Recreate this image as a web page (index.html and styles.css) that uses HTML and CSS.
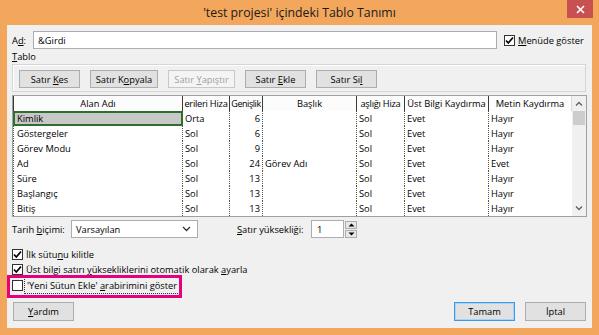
FILE: index.html
```html
<!DOCTYPE html>
<html lang="tr">
<head>
<meta charset="utf-8">
<title>Tablo Tanımı</title>
<link rel="stylesheet" href="styles.css">
</head>
<body>
<div class="window">
  <div class="titlebar">
    <span class="title">'test projesi' içindeki Tablo Tanımı</span>
    <div class="close"><svg width="9" height="9" viewBox="0 0 9 9"><path d="M1 1L8 8M8 1L1 8" stroke="#fff" stroke-width="1.6"/></svg></div>
  </div>
  <div class="client">
    <div class="row-name">
      <span class="lbl-ad">A<u>d</u>:</span>
      <div class="input name-input">&amp;Girdi</div>
      <label class="chk menu-chk"><span class="box"><svg width="11" height="11" viewBox="0 0 11 11"><path d="M2 5.5L4.3 8L9 2.5" fill="none" stroke="#000" stroke-width="1.7"/></svg></span><span><u>M</u>enüde göster</span></label>
    </div>
    <div class="lbl-tablo"><u>T</u>ablo</div>
    <div class="group">
      <button class="btn w61">Satır <u>K</u>es</button>
      <button class="btn w68">Satır K<u>o</u>pyala</button>
      <button class="btn w67 disabled">Satır <u>Y</u>apıştır</button>
      <button class="btn w61">Satır <u>E</u>kle</button>
      <button class="btn w61">Satır Si<u>l</u></button>
    </div>
    <div class="table">
      <div class="grid">
        <div class="hc c1"><span>Alan Adı</span></div>
        <div class="hc c2"><span class="tight">erileri Hiza</span></div>
        <div class="hc c3"><span class="tighter">Genişlik</span></div>
        <div class="hc c4"><span>Başlık</span></div>
        <div class="hc c5"><span class="tight">aşlığı Hiza</span></div>
        <div class="hc c6"><span>Üst Bilgi Kaydırma</span></div>
        <div class="hc c7"><span>Metin Kaydırma</span></div>

        <div class="bc c1 sel">Kimlik</div><div class="bc c2">Orta</div><div class="bc c3 num">6</div><div class="bc c4"></div><div class="bc c5">Sol</div><div class="bc c6">Evet</div><div class="bc c7">Hayır</div>
        <div class="bc c1">Göstergeler</div><div class="bc c2">Sol</div><div class="bc c3 num">6</div><div class="bc c4"></div><div class="bc c5">Sol</div><div class="bc c6">Evet</div><div class="bc c7">Hayır</div>
        <div class="bc c1">Görev Modu</div><div class="bc c2">Sol</div><div class="bc c3 num">9</div><div class="bc c4"></div><div class="bc c5">Sol</div><div class="bc c6">Evet</div><div class="bc c7">Hayır</div>
        <div class="bc c1">Ad</div><div class="bc c2">Sol</div><div class="bc c3 num">24</div><div class="bc c4">Görev Adı</div><div class="bc c5">Sol</div><div class="bc c6">Evet</div><div class="bc c7">Evet</div>
        <div class="bc c1">Süre</div><div class="bc c2">Sol</div><div class="bc c3 num">13</div><div class="bc c4"></div><div class="bc c5">Sol</div><div class="bc c6">Evet</div><div class="bc c7">Hayır</div>
        <div class="bc c1">Başlangıç</div><div class="bc c2">Sol</div><div class="bc c3 num">13</div><div class="bc c4"></div><div class="bc c5">Sol</div><div class="bc c6">Evet</div><div class="bc c7">Hayır</div>
        <div class="bc c1">Bitiş</div><div class="bc c2">Sol</div><div class="bc c3 num">13</div><div class="bc c4"></div><div class="bc c5">Sol</div><div class="bc c6">Evet</div><div class="bc c7">Hayır</div>
      </div>
      <div class="scrollbar">
        <div class="sb-arrow"><svg width="8" height="5" viewBox="0 0 8 5"><path d="M1 4.5L4 1.5L7 4.5" fill="none" stroke="#606060" stroke-width="1.3"/></svg></div>
        <div class="sb-thumb"></div>
        <div class="sb-track"></div>
        <div class="sb-arrow"><svg width="8" height="5" viewBox="0 0 8 5"><path d="M1 0.5L4 3.5L7 0.5" fill="none" stroke="#606060" stroke-width="1.3"/></svg></div>
      </div>
    </div>
    <div class="row-date">
      <span class="lbl-date">Tarih <u>b</u>içimi:</span>
      <div class="select"><span>Varsayılan</span><svg width="9" height="6" viewBox="0 0 9 6"><path d="M1 1L4.5 4.5L8 1" fill="none" stroke="#333" stroke-width="1.3"/></svg></div>
      <span class="lbl-height"><u>S</u>atır yüksekliği:</span>
      <div class="input spin-input">1</div>
      <div class="spin">
        <div class="spin-btn"><svg width="7" height="4" viewBox="0 0 7 4"><path d="M0.5 3.5L3.5 0.5L6.5 3.5Z" fill="#000"/></svg></div>
        <div class="spin-btn"><svg width="7" height="4" viewBox="0 0 7 4"><path d="M0.5 0.5L3.5 3.5L6.5 0.5Z" fill="#000"/></svg></div>
      </div>
    </div>
    <div class="checks">
      <label class="chk crow"><span class="box"><svg width="11" height="11" viewBox="0 0 11 11"><path d="M2 5.5L4.3 8L9 2.5" fill="none" stroke="#000" stroke-width="1.7"/></svg></span><span>İlk sütu<u>n</u>u kilitle</span></label>
      <label class="chk crow"><span class="box"><svg width="11" height="11" viewBox="0 0 11 11"><path d="M2 5.5L4.3 8L9 2.5" fill="none" stroke="#000" stroke-width="1.7"/></svg></span><span>Üst bilgi satırı <u>y</u>üksekliklerini otomatik olarak <u>a</u>yarla</span></label>
      <label class="chk crow hl-row"><span class="box"></span><span class="focus">'Yeni Sütun Ekle' <u>a</u>rabirimini göster</span><span class="highlight"></span></label>
    </div>
    <div class="row-bottom">
      <button class="btn2 yardim"><u>Y</u>ardım</button>
      <div class="spacer"></div>
      <button class="btn2 default">Tamam</button>
      <button class="btn2 iptal">İptal</button>
    </div>
  </div>
</div>
</body>
</html>
```
FILE: styles.css
```css
* { box-sizing: border-box; }
body {
  margin: 0;
  font-family: "Open Sans", "Noto Sans", sans-serif;
  font-size: 9.3px;
  color: #000;
}
u { text-decoration: underline; text-underline-offset: 1px; }
.window {
  width: 599px;
  height: 335px;
  background: #F2A75C;
  display: flex;
  flex-direction: column;
}
.titlebar {
  height: 25px;
  position: relative;
  display: flex;
  align-items: center;
  justify-content: center;
}
.title {
  font-size: 12.3px;
  color: #1a1a1a;
  margin-top: -1px;
}
.close {
  position: absolute;
  right: 6px;
  top: 0;
  width: 26px;
  height: 18px;
  background: #C75050;
  display: flex;
  align-items: center;
  justify-content: center;
}
.client {
  margin: 0 7px 7px 7px;
  flex: 1;
  background: #F0F0F0;
  padding: 6px 6px 0 5px;
  display: flex;
  flex-direction: column;
}
.row-name {
  display: flex;
  align-items: center;
  height: 18px;
}
.lbl-ad { width: 21px; }
.input {
  background: #fff;
  border: 1px solid #ABADB3;
  height: 18px;
  display: flex;
  align-items: center;
}
.name-input { width: 464px; padding-left: 4px; }
.chk {
  display: flex;
  align-items: center;
  gap: 3px;
}
.box {
  width: 11px;
  height: 11px;
  border: 1px solid #333;
  background: #fff;
  display: flex;
  align-items: center;
  justify-content: center;
}
.box svg { flex: none; }
.menu-chk { margin-left: 7px; }
.lbl-tablo {
  height: 12px;
  margin-top: 2px;
  line-height: 12px;
}
.group {
  margin-top: 1px;
  height: 28px;
  border: 1px solid #D5D5D5;
  box-shadow: inset 1px 1px 0 #fff;
  padding: 5px 0 0 6px;
  display: flex;
  gap: 10px;
}
.btn {
  font: inherit;
  height: 18px;
  padding: 0;
  border: 1px solid #ADADAD;
  background: #E1E1E1;
  color: #000;
}
.w61 { width: 61px; }
.w68 { width: 68px; }
.w67 { width: 67px; }
.btn.disabled {
  color: #A0A0A0;
  border-color: #C8C8C8;
  background: #F4F4F4;
}
.table {
  margin-top: 3px;
  height: 122px;
  width: 575px;
  border: 1px solid #A0A0A0;
  background: #fff;
  display: flex;
}
.grid {
  display: grid;
  grid-template-columns: 170px 47px 33px 94px 48px 84px 83px;
  grid-auto-rows: 15px;
  align-content: start;
}
.hc {
  display: flex;
  justify-content: center;
  align-items: center;
  overflow: hidden;
  white-space: nowrap;
  border-right: 1px solid #3a3a3a;
  background: #FCFCFC;
}
.hc.c1 { border-left: 1px solid #3a3a3a; }
.hc.c7 { border-right: 1px solid #D8D8D8; }
.hc span { flex: none; }
.hc .tight { letter-spacing: -0.25px; }
.hc .tighter { letter-spacing: -0.45px; font-size: 9px; }
.bc {
  display: flex;
  align-items: center;
  white-space: nowrap;
  overflow: hidden;
  padding-left: 2px;
  border-right: 1px dotted #555;
}
.bc.c1 { border-left: 1px dotted #555; padding-left: 3px; }
.bc.c7 { border-right: none; }
.bc.num { justify-content: flex-end; padding-right: 2px; }
.bc.sel {
  background: #C8C8C8;
  border: 2px solid #2E6E2E;
  padding-left: 2px;
}
.scrollbar {
  width: 15px;
  background: #F0F0F0;
  display: flex;
  flex-direction: column;
}
.sb-arrow {
  height: 15px;
  display: flex;
  align-items: center;
  justify-content: center;
}
.sb-thumb {
  height: 14px;
  margin: 0 1px;
  background: #CDCDCD;
}
.sb-track { flex: 1; }
.row-date {
  margin-top: 3px;
  height: 18px;
  display: flex;
  align-items: center;
}
.lbl-date { width: 59px; }
.select {
  width: 127px;
  height: 18px;
  background: #fff;
  border: 1px solid #ABADB3;
  display: flex;
  align-items: center;
  justify-content: space-between;
  padding: 0 6px 0 4px;
}
.lbl-height { margin-left: 39px; width: 74px; }
.spin-input { width: 33px; padding-left: 5px; }
.spin {
  margin-left: 1px;
  display: flex;
  flex-direction: column;
  gap: 1px;
}
.spin-btn {
  width: 12px;
  height: 8px;
  border: 1px solid #ADADAD;
  background: #E8E8E8;
  display: flex;
  align-items: center;
  justify-content: center;
}
.checks {
  margin-top: 9px;
  display: flex;
  flex-direction: column;
}
.crow {
  height: 15px;
}
.hl-row { position: relative; align-self: flex-start; margin-top: 1px; }
.focus {
  outline: 1px dotted #333;
  outline-offset: 1px;
  padding: 0 1px;
}
.highlight {
  position: absolute;
  left: -5px;
  top: -3px;
  width: 175px;
  height: 23px;
  border: 3px solid #E5007D;
  pointer-events: none;
}
.row-bottom {
  margin-top: 9px;
  display: flex;
  height: 19px;
}
.btn2 {
  font: inherit;
  width: 61px;
  height: 19px;
  padding: 0;
  border: 1px solid #ADADAD;
  background: #E1E1E1;
  color: #000;
}
.yardim { margin-left: 1px; }
.spacer { flex: 1; }
.default {
  border: 1px solid #3C9BE8;
  box-shadow: inset 0 0 0 1px #A9D3F5;
}
.iptal { margin-left: 10px; }
```
